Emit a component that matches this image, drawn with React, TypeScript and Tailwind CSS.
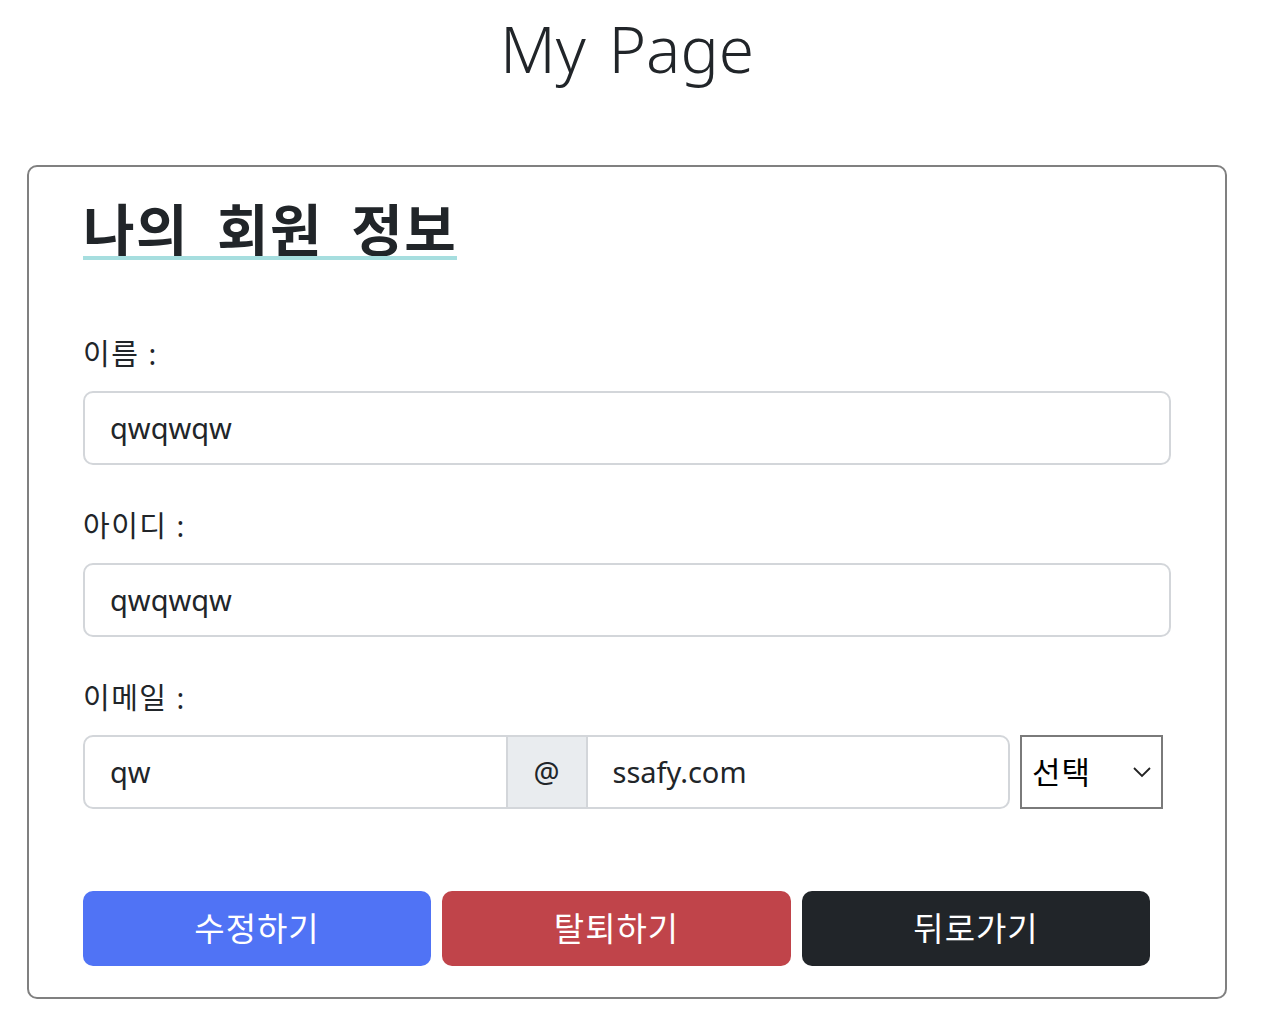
const FONT = "font-['Noto_Sans','Noto_Sans_CJK_KR',sans-serif]";

function Field({ label, value }: { label: string; value: string }) {
  return (
    <div className="flex flex-col">
      <label className="h-[40px] text-[29px] leading-[40px] tracking-[1.5px] text-[#212529]">{label}</label>
      <div className="mt-[17px] flex h-[74px] items-center rounded-[10px] border-2 border-[#d3d6da] px-[25px] text-[29px] text-[#212529]">
        {value}
      </div>
    </div>
  );
}

export default function App() {
  return (
    <div className={`${FONT} min-h-screen bg-white text-[#212529]`}>
      <div className="mr-[10px]">
        <h1 className="pt-[6px] text-center text-[64px] font-light leading-[86px] [word-spacing:6px]">
          My Page
        </h1>

        <section className="ml-[27px] mr-[27px] mt-[73px] rounded-[10px] border-2 border-[#808080] px-[54px] pb-[31px] pt-[29px]">
          <h2 className="relative inline-block text-[56px] font-bold leading-[66px] tracking-[1.5px] [word-spacing:12px]">
            나의 회원 정보
            <span className="absolute bottom-[2px] left-0 h-[4px] w-full bg-[#a6dedf]" />
          </h2>

          <div className="mt-[72px] flex flex-col gap-[41px]">
            <Field label="이름 :" value="qwqwqw" />
            <Field label="아이디 :" value="qwqwqw" />

            <div className="flex flex-col">
              <label className="h-[40px] text-[29px] leading-[40px] tracking-[1.5px]">이메일 :</label>
              <div className="mt-[17px] flex h-[74px] items-stretch">
                <div className="flex w-[927px] items-stretch overflow-hidden rounded-[10px] border-2 border-[#d3d6da] text-[29px]">
                  <div className="flex flex-1 items-center px-[25px]">qw</div>
                  <div className="flex w-[82px] items-center justify-center border-x-2 border-[#d3d6da] bg-[#e9ecef]">
                    @
                  </div>
                  <div className="flex flex-1 items-center px-[25px]">ssafy.com</div>
                </div>
                <div className="ml-[10px] flex w-[143px] items-center justify-between border-2 border-[#7a7a7a] pl-[10px] pr-[9px] text-[31px] tracking-[1px] text-black">
                  <span>선택</span>
                  <svg width="20" height="12" viewBox="0 0 20 12" fill="none">
                    <path d="M2 2 L10 10 L18 2" stroke="#222" strokeWidth="1.8" />
                  </svg>
                </div>
              </div>
            </div>
          </div>

          <div className="mt-[82px] flex gap-[11px]">
            <button className="h-[75px] w-[348px] rounded-[10px] bg-[#5073f5] text-[33px] tracking-[1px] text-white">
              수정하기
            </button>
            <button className="h-[75px] w-[349px] rounded-[10px] bg-[#c0444a] text-[33px] tracking-[1px] text-white">
              탈퇴하기
            </button>
            <button className="h-[75px] w-[348px] rounded-[10px] bg-[#212529] text-[33px] tracking-[1px] text-white">
              뒤로가기
            </button>
          </div>
        </section>
      </div>
    </div>
  );
}
